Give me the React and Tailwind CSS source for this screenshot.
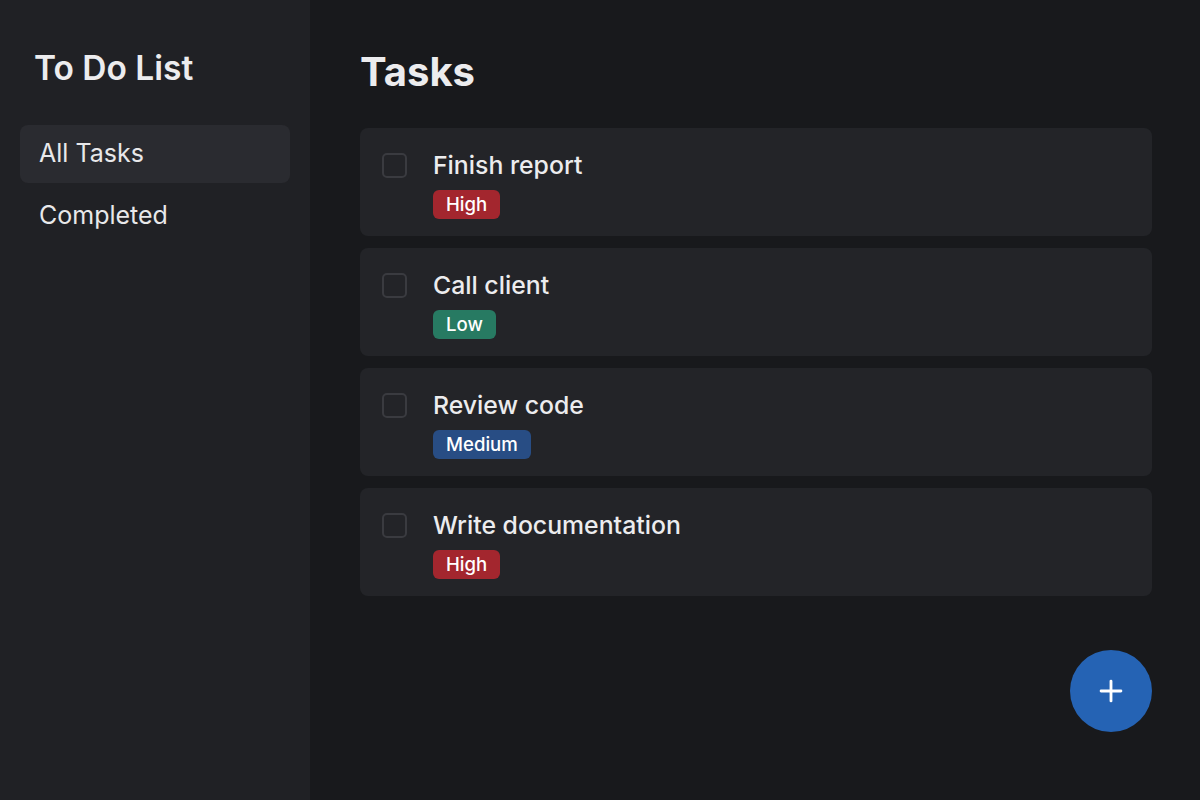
import { Plus } from "lucide-react";

const tasks = [
  { title: "Finish report", priority: "High" },
  { title: "Call client", priority: "Low" },
  { title: "Review code", priority: "Medium" },
  { title: "Write documentation", priority: "High" },
];

const badgeClass = {
  High: "bg-[#a3262e]",
  Low: "bg-[#277a62]",
  Medium: "bg-[#284d84]",
};

const TaskCard = ({ task }) => (
  <div className="flex items-start gap-[26px] rounded-lg bg-[#232428] px-[22px] pt-[22px] pb-[17px]">
    <div className="mt-[3px] h-[25px] w-[25px] shrink-0 rounded-[5px] border-2 border-[#3a3b40]" />
    <div className="flex flex-col items-start gap-[10px]">
      <span className="text-[24.8px] leading-[30px] font-medium text-[#ececee]">{task.title}</span>
      <span
        className={`${badgeClass[task.priority]} rounded-md px-[13px] text-[18.6px] leading-[29px] font-medium text-white`}
      >
        {task.priority}
      </span>
    </div>
  </div>
);

export default function App() {
  return (
    <div
      className="flex h-[800px] w-[1200px] bg-[#18191c] text-[#e8e8ea]"
      style={{ fontFamily: "Inter, 'Noto Sans', sans-serif" }}
    >
      <aside className="flex w-[310px] shrink-0 flex-col bg-[#202125] px-[20px] pt-[48px]">
        <h1 className="px-[14px] text-[33.5px] leading-[40px] font-semibold text-[#ececee]">To Do List</h1>
        <nav className="mt-[37px] flex flex-col gap-[4px]">
          <div className="flex h-[58px] items-center rounded-lg bg-[#2a2b30] px-[19px] text-[25px]">All Tasks</div>
          <div className="flex h-[58px] items-center rounded-lg px-[19px] text-[25px]">Completed</div>
        </nav>
      </aside>
      <main className="relative flex-1 pt-[48px] pr-[48px] pl-[50px]">
        <h2 className="text-[40px] leading-[48px] font-bold text-[#ececee]">Tasks</h2>
        <div className="mt-[32px] flex flex-col gap-[12px]">
          {tasks.map((t) => (
            <TaskCard key={t.title} task={t} />
          ))}
        </div>
        <button className="absolute right-[48px] bottom-[68px] flex h-[82px] w-[82px] items-center justify-center rounded-full bg-[#2563b4] text-white">
          <Plus size={34} strokeWidth={2} />
        </button>
      </main>
    </div>
  );
}
